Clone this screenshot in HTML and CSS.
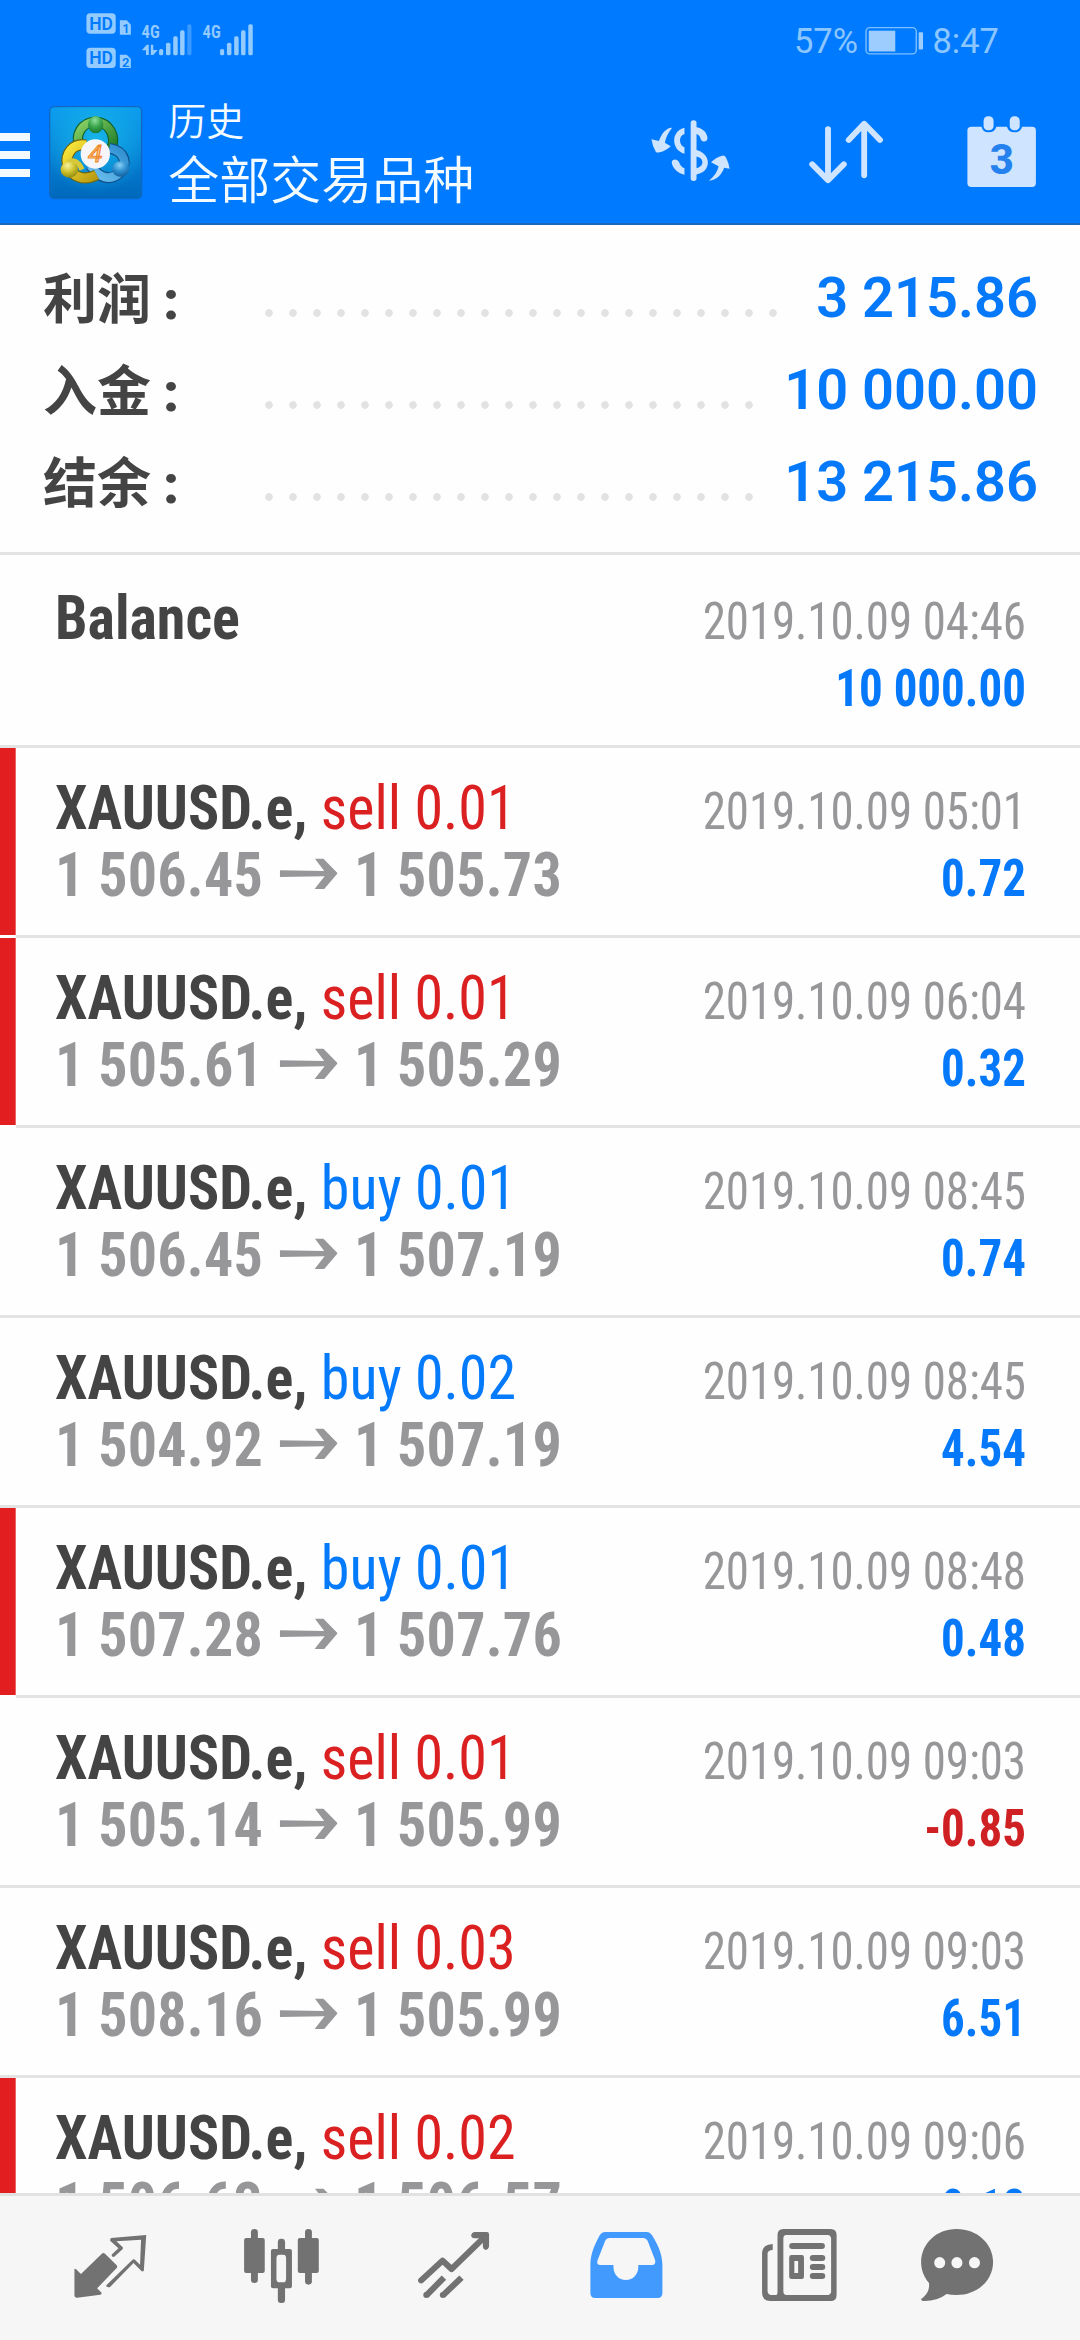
FILE: index.html
```
<!DOCTYPE html>
<html lang="zh-CN">
<head>
<meta charset="utf-8">
<title>历史</title>
<link rel="stylesheet" href="styles.css">
</head>
<body>
<svg width="0" height="0" class="defs">
  <symbol id="arrow" viewBox="732 925 151 93" preserveAspectRatio="none">
    <path d="M732 962L848 964L824 927H846L883 971L848 1018H823L849 980L732 982Z"/>
  </symbol>
</svg>
<div class="screen">
  <header class="header">
    <div class="status">
      <svg class="signals" viewBox="240 30 505 180" preserveAspectRatio="none">
        <rect x="250" y="40" width="85" height="61" rx="11"/>
        <rect x="250" y="143" width="85" height="61" rx="11"/>
        <path d="M347 61H367L379 74V104H347ZM347 164H367L379 177V204H347Z"/>
        <g class="cut">
          <text x="258" y="91" font-size="57" textLength="69" lengthAdjust="spacingAndGlyphs">HD</text>
          <text x="258" y="193" font-size="57" textLength="69" lengthAdjust="spacingAndGlyphs">HD</text>
          <text x="354" y="98" font-size="38">1</text>
          <text x="353" y="200" font-size="38">2</text>
        </g>
        <g class="net">
          <text x="410" y="114" font-size="56" textLength="53" lengthAdjust="spacingAndGlyphs">4G</text>
          <text x="587" y="114" font-size="56" textLength="53" lengthAdjust="spacingAndGlyphs">4G</text>
        </g>
        <path d="M411 151L425 134H431V165H423V151ZM437 134H444V150H457L444 165H437Z"/>
        <rect x="461" y="147" width="12" height="19" rx="5"/>
        <rect x="481" y="128" width="13" height="38" rx="5"/>
        <rect x="502" y="109" width="13" height="57" rx="5"/>
        <rect x="522" y="91" width="13" height="75" rx="5"/>
        <rect x="543" y="73" width="12" height="93" rx="5" opacity=".4"/>
        <rect x="638" y="147" width="12" height="19" rx="5"/>
        <rect x="658" y="128" width="13" height="38" rx="5"/>
        <rect x="679" y="109" width="13" height="57" rx="5"/>
        <rect x="699" y="91" width="13" height="75" rx="5"/>
        <rect x="720" y="73" width="13" height="93" rx="5"/>
      </svg>
      <div class="status-right">
        <span class="status-text">57%</span>
        <svg class="battery" viewBox="946 80 170 82" preserveAspectRatio="none">
          <rect x="949" y="82" width="146" height="78" rx="11" fill="none" stroke="#7cc0ff" stroke-width="4"/>
          <rect x="957" y="91" width="77" height="62"/>
          <rect x="1102" y="96" width="13" height="51" rx="3"/>
        </svg>
        <span class="status-text">8:47</span>
      </div>
    </div>
    <div class="toolbar">
      <div class="menu"><i></i><i></i><i></i></div>
      <svg class="logo" viewBox="24 46 286 286">
        <defs>
          <linearGradient id="lb" x1="0" y1="0" x2="0" y2="1"><stop offset="0" stop-color="#0c9cf0"/><stop offset="1" stop-color="#0068bc"/></linearGradient>
          <radialGradient id="lh" cx=".5" cy=".35" r=".6"><stop offset="0" stop-color="#16b4e8"/><stop offset="1" stop-color="#16b4e8" stop-opacity="0"/></radialGradient>
          <linearGradient id="lg" x1="0" y1="0" x2="1" y2="1"><stop offset="0" stop-color="#8ed468"/><stop offset="1" stop-color="#1c7a26"/></linearGradient>
          <linearGradient id="ly" x1="0" y1="0" x2="1" y2="1"><stop offset="0" stop-color="#fbe93c"/><stop offset="1" stop-color="#b99a12"/></linearGradient>
          <linearGradient id="lu" x1="1" y1="0" x2="0" y2="1"><stop offset="0" stop-color="#2f8ed0"/><stop offset="1" stop-color="#6cc0ee"/></linearGradient>
          <radialGradient id="bg" cx=".45" cy=".25" r=".8"><stop offset="0" stop-color="#8fe09c"/><stop offset=".5" stop-color="#3aa54c"/><stop offset="1" stop-color="#17702a"/></radialGradient>
          <radialGradient id="by" cx=".4" cy=".25" r=".8"><stop offset="0" stop-color="#f7f3a0"/><stop offset=".5" stop-color="#cfc32c"/><stop offset="1" stop-color="#8c8410"/></radialGradient>
          <radialGradient id="bu" cx=".45" cy=".25" r=".8"><stop offset="0" stop-color="#86d0f4"/><stop offset=".5" stop-color="#2d8fd0"/><stop offset="1" stop-color="#125c98"/></radialGradient>
        </defs>
        <rect x="29" y="51" width="276" height="276" rx="14" fill="url(#lb)" stroke="#1068c0" stroke-width="4"/>
        <rect x="31" y="53" width="272" height="272" rx="12" fill="url(#lh)"/>
        <path d="M118 172C104 134 126 98 166 96C208 98 230 140 214 178" fill="none" stroke="#12602a" stroke-width="31"/>
        <path d="M118 172C104 134 126 98 166 96C208 98 230 140 214 178" fill="none" stroke="url(#lg)" stroke-width="24"/>
        <path d="M208 176C256 184 266 226 236 252C210 274 178 266 152 228" fill="none" stroke="#0e4f8a" stroke-width="33"/>
        <path d="M208 176C256 184 266 226 236 252C210 274 178 266 152 228" fill="none" stroke="url(#lu)" stroke-width="26"/>
        <path d="M138 166C98 160 76 192 82 226C94 260 130 276 170 256" fill="none" stroke="#6c6410" stroke-width="34"/>
        <path d="M138 166C98 160 76 192 82 226C94 260 130 276 170 256" fill="none" stroke="url(#ly)" stroke-width="27"/>
        <path d="M84 222C98 206 116 216 126 240" fill="none" stroke="#d8c838" stroke-width="16"/>
        <ellipse cx="167" cy="105" rx="23" ry="26" fill="url(#bg)"/>
        <ellipse cx="88" cy="240" rx="26" ry="24" fill="url(#by)"/>
        <ellipse cx="242" cy="238" rx="26" ry="23" fill="url(#bu)"/>
        <circle cx="166" cy="193" r="44" fill="#f6f6fa"/>
        <text class="logo-digit" x="145" y="218" font-size="72" textLength="42" lengthAdjust="spacingAndGlyphs">4</text>
      </svg>
      <div class="titles">
        <div class="title">历史</div>
        <div class="subtitle">全部交易品种</div>
      </div>
      <div class="actions">
        <svg class="act-symbol" viewBox="315 355 245 195" preserveAspectRatio="none">
          <path d="M382 384C366 383 350 403 344 424L322 419Q325 440 335 457Q339 460 346 458Q364 454 378 440L361 429C364 412 372 397 382 384Z"/>
          <path d="M489 543C505 530 514 515 517 500L495 488Q508 473 528 468Q535 467 538 473Q546 488 549 507L533 504C527 524 510 542 489 543Z"/>
          <path d="M418 384C400 388 388 404 388 422C388 442 400 458 418 462V443C409 440 405 431 405 422C405 413 409 406 418 403Z"/>
          <path d="M381 489C381 477 397 476 402 487C405 496 409 502 418 506V525C398 520 384 506 381 489Z"/>
          <rect x="436" y="362" width="17" height="182" rx="8"/>
          <path d="M450 382C470 385 484 398 485 416C484 427 470 430 465 418C463 408 459 404 450 402Z"/>
          <path d="M450 450C472 455 486 470 486 488C486 507 473 522 450 525V506C464 504 470 497 470 488C470 479 464 473 450 470Z"/>
        </svg>
        <svg class="act-sort" viewBox="775 355 225 205" preserveAspectRatio="none">
          <path d="M836 388V540M790 494L836 542L882 494M941 527V373M896 421L941 372L987 421" fill="none" stroke="#cfe4ff" stroke-width="17" stroke-linecap="round" stroke-linejoin="round"/>
        </svg>
        <svg class="act-date" viewBox="1235 340 215 230" preserveAspectRatio="none">
          <path d="M1254 381H1283Q1287 398 1303 398Q1322 398 1326 381H1357Q1361 398 1379 398Q1396 398 1401 381H1430Q1441 381 1441 392V550Q1441 562 1430 562H1254Q1242 562 1242 550V392Q1242 381 1254 381Z"/>
          <rect x="1289" y="350" width="29" height="42" rx="13"/>
          <rect x="1365" y="350" width="29" height="42" rx="13"/>
          <text class="date-digit" x="1307" y="524" font-size="129" textLength="70" lengthAdjust="spacingAndGlyphs">3</text>
        </svg>
      </div>
    </div>
  </header>

  <section class="summary">
    <div class="sum-row"><span class="sum-label">利润<b>:</b></span><span class="dots dots-long"></span><span class="sum-value">3 215.86</span></div>
    <div class="sum-row"><span class="sum-label">入金<b>:</b></span><span class="dots"></span><span class="sum-value">10 000.00</span></div>
    <div class="sum-row"><span class="sum-label">结余<b>:</b></span><span class="dots"></span><span class="sum-value">13 215.86</span></div>
  </section>

  <main class="deals">
    <div class="deal balance"><div class="left"><div class="name">Balance</div></div><div class="right"><div class="time">2019.10.09 04:46</div><div class="profit">10 000.00</div></div></div>
    <div class="deal marked"><div class="left"><div class="name">XAUUSD.e, <span class="sell">sell 0.01</span></div><div class="price">1 506.45<svg><use href="#arrow"/></svg>1 505.73</div></div><div class="right"><div class="time">2019.10.09 05:01</div><div class="profit">0.72</div></div></div>
    <div class="deal marked"><div class="left"><div class="name">XAUUSD.e, <span class="sell">sell 0.01</span></div><div class="price">1 505.61<svg><use href="#arrow"/></svg>1 505.29</div></div><div class="right"><div class="time">2019.10.09 06:04</div><div class="profit">0.32</div></div></div>
    <div class="deal"><div class="left"><div class="name">XAUUSD.e, <span class="buy">buy 0.01</span></div><div class="price">1 506.45<svg><use href="#arrow"/></svg>1 507.19</div></div><div class="right"><div class="time">2019.10.09 08:45</div><div class="profit">0.74</div></div></div>
    <div class="deal"><div class="left"><div class="name">XAUUSD.e, <span class="buy">buy 0.02</span></div><div class="price">1 504.92<svg><use href="#arrow"/></svg>1 507.19</div></div><div class="right"><div class="time">2019.10.09 08:45</div><div class="profit">4.54</div></div></div>
    <div class="deal marked"><div class="left"><div class="name">XAUUSD.e, <span class="buy">buy 0.01</span></div><div class="price">1 507.28<svg><use href="#arrow"/></svg>1 507.76</div></div><div class="right"><div class="time">2019.10.09 08:48</div><div class="profit">0.48</div></div></div>
    <div class="deal"><div class="left"><div class="name">XAUUSD.e, <span class="sell">sell 0.01</span></div><div class="price">1 505.14<svg><use href="#arrow"/></svg>1 505.99</div></div><div class="right"><div class="time">2019.10.09 09:03</div><div class="profit loss">-0.85</div></div></div>
    <div class="deal"><div class="left"><div class="name">XAUUSD.e, <span class="sell">sell 0.03</span></div><div class="price">1 508.16<svg><use href="#arrow"/></svg>1 505.99</div></div><div class="right"><div class="time">2019.10.09 09:03</div><div class="profit">6.51</div></div></div>
    <div class="deal marked"><div class="left"><div class="name">XAUUSD.e, <span class="sell">sell 0.02</span></div><div class="price">1 506.63<svg><use href="#arrow"/></svg>1 506.57</div></div><div class="right"><div class="time">2019.10.09 09:06</div><div class="profit">0.12</div></div></div>
  </main>

  <nav class="tabs">
    <svg class="tab-quotes" viewBox="205 495 230 245" preserveAspectRatio="none">
      <path d="M215 628Q216 624 220 628L234 642L294 582Q299 577 304 581L338 616Q341 620 338 624L281 685L294 698Q295 703 290 704L223 713Q215 714 215 706Z"/>
      <path d="M424 525L322 534Q318 536 319 542L343 565L323 584Q323 591 330 591L355 568Q358 564 355 561L337 544L409 539L406 614L392 600Q388 596 384 599L308 676Q306 682 318 682L387 609L410 633Q413 636 417 632Z"/>
    </svg>
    <svg class="tab-chart" viewBox="700 495 235 245" preserveAspectRatio="none">
      <rect x="729" y="507" width="20" height="162" rx="10"/><rect x="709" y="534" width="60" height="105" rx="6"/>
      <rect x="886" y="507" width="20" height="167" rx="10"/><rect x="865" y="534" width="61" height="105" rx="6"/>
      <rect x="807" y="536" width="21" height="40" rx="10"/><rect x="807" y="675" width="21" height="54" rx="9"/>
      <path fill-rule="evenodd" d="M793 567H842Q848 567 848 573V679Q848 685 842 685H793Q787 685 787 679V573Q787 567 793 567ZM812 584Q803 584 803 594V656Q803 667 812 667H823Q831 667 831 656V594Q831 584 823 584Z"/>
    </svg>
    <svg class="tab-trade" viewBox="1205 495 225 245" preserveAspectRatio="none">
      <g fill="none" stroke="#727272" stroke-width="18" stroke-linejoin="round">
        <path d="M1223 661L1285 602L1311 627L1408 530" stroke-linecap="round"/>
        <path d="M1238 706L1289 653M1286 706L1340 653"/>
      </g>
      <circle cx="1238" cy="705" r="9"/><circle cx="1286" cy="705" r="9"/>
      <path d="M1377 516H1414Q1420 516 1420 523V560Q1418 569 1410 570Q1403 568 1402 560V535H1377Q1368 533 1368 525Q1370 517 1377 516Z"/>
    </svg>
    <svg class="tab-history" viewBox="140 495 225 245" preserveAspectRatio="none">
      <path fill-rule="evenodd" d="M190 516H310Q320 516 326 526C340 549 355 578 356 613V700Q356 714 342 714H161Q147 714 147 700V613C147 580 162 549 174 526Q180 516 190 516ZM202 534Q193 534 190 542L168 600Q164 615 175 615H214C212 642 228 660 250 660C272 660 288 642 286 615H327Q337 614 335 601L313 542Q309 534 301 534Z"/>
    </svg>
    <svg class="tab-news" viewBox="640 495 230 245" preserveAspectRatio="none">
      <path fill-rule="evenodd" d="M708 507H846Q863 507 863 525V704Q863 723 846 723H670Q646 722 646 698V578Q648 553 677 552V570Q663 571 662 580V694Q663 705 673 705H688Q691 702 691 697V525Q691 507 708 507ZM716 525Q708 526 708 535V695Q709 705 718 705H837Q846 704 847 695V535Q846 526 837 525Z"/>
      <rect x="725" y="549" width="104" height="18" rx="9"/>
      <path fill-rule="evenodd" d="M732 585H762Q768 585 768 592V650Q768 657 762 657H732Q725 657 725 650V592Q725 585 732 585ZM740 603V639H751V603Z"/>
      <rect x="785" y="585" width="45" height="18" rx="9"/><rect x="785" y="612" width="45" height="18" rx="9"/><rect x="785" y="639" width="45" height="18" rx="9"/>
    </svg>
    <svg class="tab-chat" viewBox="1100 495 225 245" preserveAspectRatio="none">
      <path fill-rule="evenodd" d="M1212 507C1272 507 1318 551 1318 606C1318 662 1272 705 1212 705Q1195 705 1183 702Q1156 724 1115 723Q1107 721 1110 716C1127 704 1134 688 1132 669C1117 651 1109 630 1109 606C1110 551 1153 507 1212 507ZM1163 591A16 17 0 1 0 1163 625A16 17 0 1 0 1163 591ZM1213 591A16 17 0 1 0 1213 625A16 17 0 1 0 1213 591ZM1264 591A16 17 0 1 0 1264 625A16 17 0 1 0 1264 591Z"/>
    </svg>
  </nav>
</div>
</body>
</html>
```
FILE: styles.css
```
* { box-sizing: border-box; }
body { margin: 0; background: #fefefe; font-family: Roboto, "Noto Sans CJK SC", sans-serif; }
svg { display: block; flex: none; }
.defs { position: absolute; }
.screen { width: 1080px; height: 2340px; display: flex; flex-direction: column; overflow: hidden; background: #fefefe; }

.header { flex: none; height: 225px; background: #007aff; border-bottom: 2px solid #1a68bd; }
.status { display: flex; justify-content: space-between; height: 80px; padding: 10px 81px 0 82.6px; }
.signals { width: 173.9px; height: 60px; fill: #93cbff; }
.cut text { fill: #007aff; font-weight: 600; }
.net text { font-family: "Roboto Condensed", Roboto, sans-serif; font-weight: 600; }
.status-right { display: flex; gap: 9px; }
.status-text { font-size: 34.5px; line-height: 62px; color: #8cc6ff; }
.status-text:first-child { margin-right: -2px; }
.battery { width: 58.5px; height: 27.5px; margin-top: 17px; fill: #9dccff; }

.toolbar { display: flex; height: 143px; }
.menu { width: 30px; margin: 53px 19px 0 0; display: flex; flex-direction: column; gap: 10px; }
.menu i { height: 8px; background: #f2faff; }
.logo { width: 95.3px; height: 95.3px; margin: 25px 0 0 -1px; }
.logo-digit { font-weight: 400; font-style: italic; fill: #ffd9a8; stroke: #f0882a; stroke-width: 3.5px; }
.titles { margin: 12px 0 0 25px; color: #f4fbff; font-weight: 350; font-family: "Noto Sans CJK SC", sans-serif; white-space: nowrap; }
.title { font-size: 38px; line-height: 54px; }
.subtitle { font-size: 51px; line-height: 62px; }
.actions { display: flex; margin-left: auto; padding-right: 40.7px; fill: #cfe4ff; }
.act-symbol { width: 84.4px; height: 65px; margin: 38.3px 74px 0 0; }
.act-sort { width: 77.5px; height: 68.3px; margin: 38.3px 80.9px 0 0; }
.act-date { width: 74px; height: 76.7px; margin-top: 33.3px; }
.date-digit { font-weight: 800; fill: #2481ee; }

.summary { flex: none; height: 330px; padding: 27px 42px 0 43px; border-bottom: 3px solid #e3e3e3; }
.sum-row { display: flex; height: 92px; line-height: 92px; }
.sum-label { width: 214px; font-size: 54px; font-weight: 700; color: #444; padding-top: 3px; }
.sum-label b { margin-left: 12px; }
.dots { width: 504px; background: radial-gradient(circle at 12px 61px, #e2e2e2 3.4px, transparent 4.2px) 0 0 / 24px 92px repeat-x; }
.dots-long { width: 528px; }
.sum-value { margin-left: auto; font-size: 56px; font-weight: 650; color: #0579fa; }

.deals { flex: 1; min-height: 0; overflow: hidden; font-family: "Roboto Condensed", Roboto, sans-serif; }
.deal { display: flex; justify-content: space-between; height: 190px; padding: 26.3px 54px 0 55px; border-bottom: 3px solid #e3e3e3; white-space: nowrap; }
.balance { height: 193px; padding-top: 29.3px; }
.marked {
  border-bottom-color: transparent;
  background:
    linear-gradient(#e31e20, #e31e20) 0 0 / 15.7px calc(100% - 3px) no-repeat border-box,
    linear-gradient(#e3e3e3, #e3e3e3) 15.7px 100% / 100% 3px no-repeat border-box;
}
.left { font-size: 62px; line-height: 67px; font-weight: 700; transform: scaleX(.936); transform-origin: 0 0; }
.name { color: #444; }
.sell, .buy { font-weight: 400; }
.sell { color: #db2022; }
.buy { color: #057bfb; }
.price { display: flex; color: #97979a; letter-spacing: .25px; }
.price svg { width: 62px; height: 31px; margin: 17px 17px 0 18px; fill: #97979a; }
.right { padding-top: 3.4px; font-size: 52px; line-height: 67px; text-align: right; transform: scaleX(.903); transform-origin: 100% 0; }
.time { color: #97979a; letter-spacing: -.1px; }
.profit { color: #0579fa; font-weight: 700; }
.loss { color: #cf2023; }

.tabs { flex: none; display: flex; gap: 93px; height: 147px; padding: 29px 0 0 70.6px; background: #f6f6f6; border-top: 3px solid #e2e2e2; fill: #727272; }
.tabs svg { width: 79px; height: 81.7px; }
.tabs .tab-chart { width: 80.9px; margin-left: -1.8px; }
.tabs .tab-trade { width: 77.5px; }
.tabs .tab-history { width: 77.5px; margin-left: 2.7px; fill: #429aff; }
.tabs .tab-news { margin-left: 1.7px; }
.tabs .tab-chat { width: 77.5px; margin-left: -13.8px; }
```
